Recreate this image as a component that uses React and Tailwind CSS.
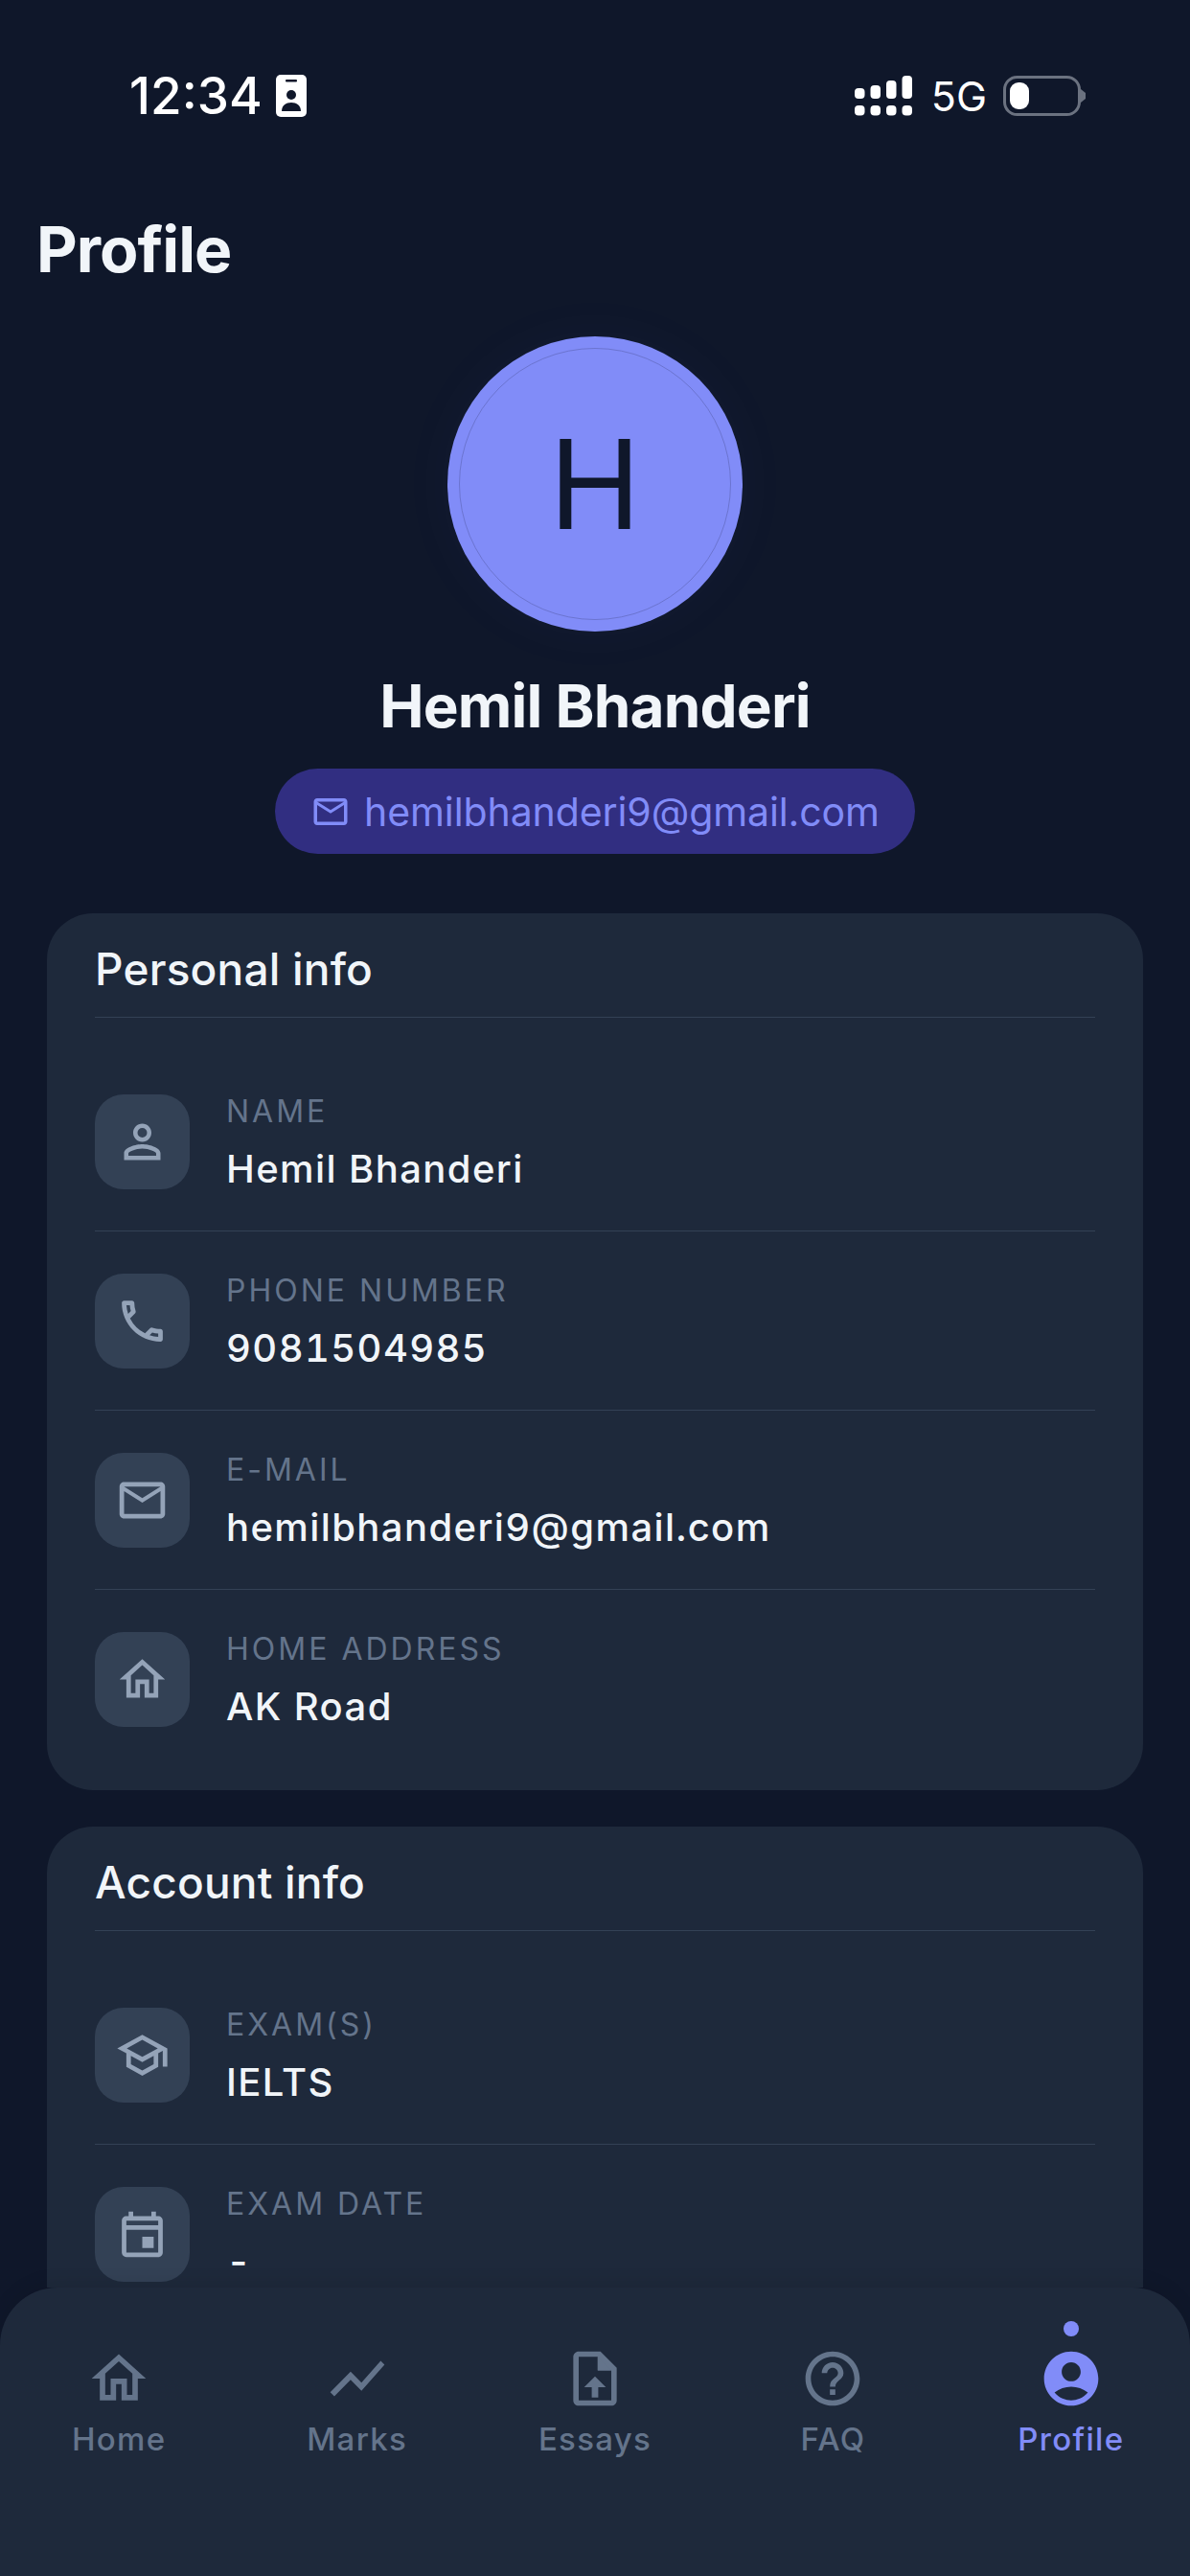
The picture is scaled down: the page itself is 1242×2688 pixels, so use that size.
import {
  MdPersonOutline,
  MdOutlineCall,
  MdMailOutline,
  MdOutlineHome,
  MdOutlineSchool,
  MdOutlineEvent,
  MdShowChart,
  MdHelpOutline,
  MdAccountCircle,
} from 'react-icons/md'

const personal = [
  { label: 'NAME', value: 'Hemil Bhanderi', Icon: MdPersonOutline },
  { label: 'PHONE NUMBER', value: '9081504985', Icon: MdOutlineCall },
  { label: 'E-MAIL', value: 'hemilbhanderi9@gmail.com', Icon: MdMailOutline },
  { label: 'HOME ADDRESS', value: 'AK Road', Icon: MdOutlineHome },
]

const account = [
  { label: 'EXAM(S)', value: 'IELTS', Icon: MdOutlineSchool },
  { label: 'EXAM DATE', value: '-', Icon: MdOutlineEvent },
]

// upload_file with the folded corner filled in
function EssayIcon({ className }) {
  return (
    <svg viewBox="0 0 24 24" fill="currentColor" className={className}>
      <path d="M14 2H6c-1.1 0-2 .9-2 2v16c0 1.1.89 2 1.99 2H18c1.1 0 2-.9 2-2V8l-6-6zm4 18H6V4h7v5h5v11z" />
      <path d="M13 4l5 5h-5z" />
      <path d="M12 11.2l-4 4h2.8V19h2.4v-3.8H16z" />
    </svg>
  )
}

const tabs = [
  { label: 'Home', Icon: MdOutlineHome },
  { label: 'Marks', Icon: MdShowChart },
  { label: 'Essays', Icon: EssayIcon },
  { label: 'FAQ', Icon: MdHelpOutline },
  { label: 'Profile', Icon: MdAccountCircle, active: true },
]

function IdBadge() {
  return (
    <svg viewBox="0 0 32 44" className="w-[32px] h-[44px]">
      <rect width="32" height="44" rx="5" fill="#ffffff" />
      <rect x="10" y="5" width="12" height="2.5" rx="1" fill="#0f172a" />
      <circle cx="16" cy="21" r="5" fill="#0f172a" />
      <path d="M6 38c0-6 4.5-9 10-9s10 3 10 9z" fill="#0f172a" />
    </svg>
  )
}

function Signal() {
  const bars = [
    [0, 13, 11],
    [16.5, 10, 14],
    [33, 5, 19],
    [49.5, 0, 24],
  ]
  return (
    <svg viewBox="0 0 60 42" className="w-[60px] h-[42px]" fill="#ffffff">
      {bars.map(([x, y, h]) => (
        <g key={x}>
          <rect x={x} y={y} width="10.5" height={h} rx="4" />
          <rect x={x} y="31" width="10.5" height="10.5" rx="4" />
        </g>
      ))}
    </svg>
  )
}

function Battery() {
  return (
    <svg viewBox="0 0 86 42" className="w-[86px] h-[42px]">
      <rect x="1.5" y="1.5" width="78" height="39" rx="13" fill="none" stroke="#6b7280" strokeWidth="3" />
      <rect x="7" y="7" width="20" height="28" rx="9" fill="#ffffff" />
      <path d="M81 14l5 4v6l-5 4z" fill="#6b7280" />
    </svg>
  )
}

function InfoRow({ item, last }) {
  const { Icon } = item
  return (
    <div className={`flex items-center gap-[38px] py-[43.5px] ${last ? '' : 'border-b border-[#334155]'}`}>
      <div className="w-[99px] h-[99px] shrink-0 rounded-[30px] bg-[#334155] flex items-center justify-center">
        <Icon className="w-[57px] h-[57px] text-[#94a3b8]" />
      </div>
      <div className="flex flex-col gap-[22px]">
        <span className="text-[32px] leading-[36px] tracking-[3px] text-[#64748b]">{item.label}</span>
        <span className="text-[40px] leading-[40px] tracking-[1.4px] font-medium tabular-nums text-[#f1f5f9]">{item.value}</span>
      </div>
    </div>
  )
}

function InfoCard({ title, items, extra }) {
  return (
    <section className={`mx-[49px] rounded-[48px] bg-[#1e293b] px-[50px] pb-[23px] ${extra}`}>
      <h2 className="h-[109px] pt-[30px] leading-[56px] border-b border-[#334155] text-[46px] font-medium tracking-[0.2px] text-[#f1f5f9]">
        {title}
      </h2>
      <div className="pt-[36px]">
        {items.map((item, i) => (
          <InfoRow key={item.label} item={item} last={i === items.length - 1} />
        ))}
      </div>
    </section>
  )
}

export default function App() {
  return (
    <div className="h-[2688px] flex flex-col overflow-hidden bg-[#0f172a] font-[Inter,sans-serif]">
      <main className="flex-1 min-h-0 overflow-hidden">
        {/* Status bar */}
        <div className="h-[200px] pt-[78px] pl-[135px] pr-[109px] flex items-start justify-between text-white">
          <div className="flex items-center gap-[14px] h-[44px]">
            <span className="text-[53px] leading-[44px] font-medium">12:34</span>
            <IdBadge />
          </div>
          <div className="flex items-center gap-[20px] h-[44px]">
            <Signal />
            <span className="text-[43px] leading-[44px]">5G</span>
            <div className="-ml-[3px]">
              <Battery />
            </div>
          </div>
        </div>

        <h1 className="h-[119px] pl-[38px] pt-[20px] text-[66px] leading-[80px] font-bold tracking-[-1px] text-[#f1f5f9]">
          Profile
        </h1>

        {/* Avatar + identity */}
        <div className="flex flex-col items-center pt-[32px]">
          <div className="w-[308px] h-[308px] rounded-full bg-[#818cf8] p-[12px] shadow-[0_0_60px_rgba(129,140,248,0.04)]">
            <div className="w-full h-full rounded-full border border-[#6b74d0] flex items-center justify-center">
              <span className="text-[129px] leading-none text-[#0f172a]">H</span>
            </div>
          </div>
          <div className="mt-[42px] text-[62px] leading-[72px] font-bold tracking-[-0.8px] text-[#f1f5f9]">
            Hemil Bhanderi
          </div>
          <div className="mt-[29px] h-[89px] px-[37px] rounded-full bg-[#312e81] flex items-center gap-[14px] text-[#818cf8]">
            <MdMailOutline className="w-[42px] h-[42px]" />
            <span className="text-[41px] leading-[50px] tracking-[-0.1px]">hemilbhanderi9@gmail.com</span>
          </div>
        </div>

        <InfoCard title="Personal info" items={personal} extra="mt-[62px]" />
        <InfoCard title="Account info" items={account} extra="mt-[38px]" />
      </main>

      {/* Bottom tabs */}
      <nav className="relative h-[301px] shrink-0 rounded-t-[60px] bg-[#1e293b] flex items-start shadow-[0_-6px_18px_rgba(0,0,0,0.08)]">
        {tabs.map(({ label, Icon, active }) => (
          <div key={label} className="flex-1 flex flex-col items-center pt-[35px]">
            <div className={`w-[16px] h-[16px] rounded-full ${active ? 'bg-[#818cf8]' : ''}`} />
            <Icon className={`mt-[10px] w-[68px] h-[68px] ${active ? 'text-[#818cf8]' : 'text-[#64748b]'}`} />
            <span className={`mt-[8px] text-[33px] leading-[42px] font-medium tracking-[1.3px] ${active ? 'text-[#818cf8]' : 'text-[#64748b]'}`}>
              {label}
            </span>
          </div>
        ))}
      </nav>
    </div>
  )
}
